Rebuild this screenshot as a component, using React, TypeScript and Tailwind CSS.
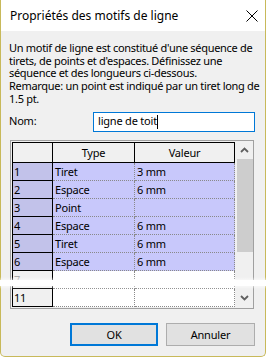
import React from 'react'

type Row = { n: string; type: string; val: string; sel: boolean; dim?: boolean }

const ROWS: Row[] = [
  { n: '1', type: 'Tiret', val: '3 mm', sel: true },
  { n: '2', type: 'Espace', val: '6 mm', sel: true },
  { n: '3', type: 'Point', val: '', sel: true },
  { n: '4', type: 'Espace', val: '6 mm', sel: true },
  { n: '5', type: 'Tiret', val: '6 mm', sel: true },
  { n: '6', type: 'Espace', val: '6 mm', sel: true },
  { n: '7', type: '', val: '', sel: false, dim: true },
  { n: '11', type: '', val: '', sel: false },
]

function Chevron({ up }: { up?: boolean }) {
  return (
    <svg width="9" height="6" viewBox="0 0 9 6" className="block">
      <polyline
        points={up ? '1,5 4.5,1.5 8,5' : '1,1 4.5,4.5 8,1'}
        fill="none"
        stroke="#606060"
        strokeWidth="1.8"
      />
    </svg>
  )
}

function GridRow({ r }: { r: Row }) {
  const data = r.sel ? 'bg-[#c8c8fb]' : 'bg-white'
  return (
    <div className="flex h-[18px]">
      <div
        className={`w-[41px] border-x border-b border-black pl-[1px] leading-[17px] ${
          r.sel ? 'bg-[#c2c2ea]' : 'bg-[#f0f0f0]'
        } ${r.dim ? 'text-[#a8a8a8]' : 'text-black'}`}
      >
        {r.n}
      </div>
      <div className={`w-[82px] border-r border-b border-dotted border-[#8a8a8a] pl-[2px] leading-[17px] ${data}`}>
        {r.type}
      </div>
      <div className={`w-[100px] border-r border-b border-dotted border-[#8a8a8a] pl-[2px] leading-[17px] ${data}`}>
        {r.val}
      </div>
    </div>
  )
}

export default function App() {
  return (
    <div className="w-[266px] h-[358px] bg-white font-['Noto_Sans','Liberation_Sans',sans-serif] text-[11px] tracking-[-0.2px] text-black relative">
      <div className="w-[266px] h-[357px] flex flex-col border-x border-b border-[#c8b95a] rounded-b-[5px] overflow-hidden bg-[#f0f0f0]">
        {/* title bar */}
        <div className="h-[31px] bg-white flex items-center justify-between pl-[9px] pr-[7px] shrink-0">
          <span className="text-[12px] tracking-normal whitespace-nowrap">Propriétés des motifs de ligne</span>
          <svg width="12" height="12" viewBox="0 0 12 12" className="block">
            <path d="M0.5 0.5 L11.5 11.5 M11.5 0.5 L0.5 11.5" stroke="#000" strokeWidth="1" />
          </svg>
        </div>

        <div className="flex-1 flex flex-col pl-[8px] pr-[10px]">
          <p className="mt-[11px] leading-[12.7px] tracking-[-0.3px] whitespace-nowrap">
            Un motif de ligne est constitué d'une séquence de
            <br />
            tirets, de points et d'espaces. Définissez une
            <br />
            séquence et des longueurs ci-dessous.
            <br />
            Remarque: un point est indiqué par un tiret long de
            <br />
            1.5 pt.
          </p>

          <div className="mt-[6px] flex items-center h-[20px]">
            <span className="w-[84px]">Nom:</span>
            <div className="w-[162px] h-[20px] border border-[#0078d7] bg-white flex items-center pl-[4px]">
              <span>ligne de toit</span>
              <span className="w-[1px] h-[14px] bg-black" />
            </div>
          </div>

          <div className="mt-[8px] ml-[1px] w-[244px] h-[169px] border border-[#a0a0a0] p-[1px] flex bg-[#f0f0f0]">
            <div className="w-[223px] flex flex-col">
              <div className="flex h-[21px]">
                <div className="w-[41px] border border-black" />
                <div className="w-[82px] border-y border-r border-black text-center leading-[19px]">Type</div>
                <div className="w-[100px] border-y border-r border-black text-center leading-[19px]">Valeur</div>
              </div>
              {ROWS.map(r => (
                <GridRow key={r.n} r={r} />
              ))}
            </div>
            <div className="ml-[1px] w-[17px] flex flex-col">
              <div className="h-[17px] flex items-center justify-center">
                <Chevron up />
              </div>
              <div className="ml-[1px] w-[16px] h-[93px] bg-[#cdcdcd]" />
              <div className="flex-1" />
              <div className="h-[17px] flex items-center justify-center">
                <Chevron />
              </div>
            </div>
          </div>

          <div className="mt-[14px] flex justify-end gap-[8px]">
            <button className="w-[88px] h-[23px] border-2 border-[#0078d7] bg-[#e1e1e1] leading-[19px]">OK</button>
            <button className="w-[89px] h-[23px] border border-[#adadad] bg-[#e1e1e1] leading-[21px]">Annuler</button>
          </div>
        </div>
      </div>

      {/* torn-screenshot band */}
      <div className="absolute left-0 right-0 top-[277px] h-[12px] bg-gradient-to-b from-transparent via-white to-transparent" />
      <div className="absolute left-0 right-0 top-[280px] h-[6px] bg-white" />
    </div>
  )
}
